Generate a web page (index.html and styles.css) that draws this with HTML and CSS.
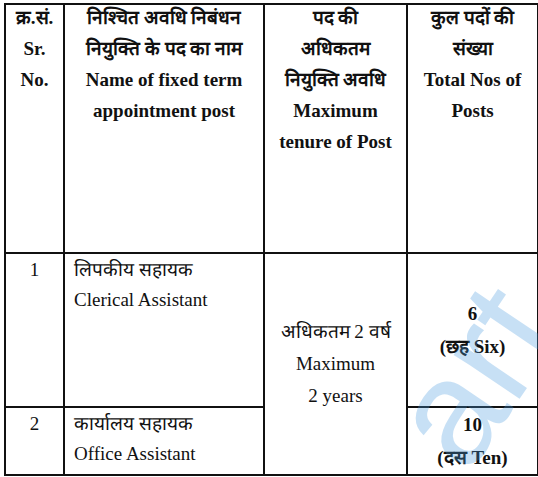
FILE: index.html
```html
<!DOCTYPE html>
<html>
<head>
<meta charset="utf-8">
<link rel="stylesheet" href="styles.css">
</head>
<body>
<div class="page">
  <table class="posts">
    <colgroup>
      <col class="c1"><col class="c2"><col class="c3"><col class="c4">
    </colgroup>
    <tr class="head">
      <th><div class="hd">क्र.सं.<br>Sr.<br>No.</div></th>
      <th><div class="hd">निश्चित अवधि निबंधन<br>नियुक्ति के पद का नाम<br>Name of fixed term<br>appointment post</div></th>
      <th><div class="hd">पद की<br>अधिकतम<br>नियुक्ति अवधि<br>Maximum<br>tenure of Post</div></th>
      <th><div class="hd">कुल पदों की<br>संख्या<br>Total Nos of<br>Posts</div></th>
    </tr>
    <tr class="r1">
      <td class="num">1</td>
      <td class="name">लिपकीय सहायक<br>Clerical Assistant</td>
      <td class="tenure" rowspan="2">अधिकतम 2 वर्ष<br>Maximum<br>2 years</td>
      <td class="count">6<br>(छह Six)</td>
    </tr>
    <tr class="r2">
      <td class="num">2</td>
      <td class="name">कार्यालय सहायक<br>Office Assistant</td>
      <td class="count">10<br>(दस Ten)</td>
    </tr>
  </table>
  <p class="note">(नोट- कार्यालय सहायक पदों की संख्या में परिवर्तन किया जा सकता है)</p>
  <div class="watermark">art</div>
</div>
</body>
</html>
```
FILE: styles.css
```css
html, body {
  margin: 0;
  padding: 0;
  background: #fff;
}
body {
  font-family: "Liberation Serif", "Times New Roman", Tinos, "DejaVu Serif", serif;
  color: #111;
  overflow: hidden;
  height: 477px;
}
.page {
  position: relative;
  padding: 3px 1px 0 4px;
  height: 477px;
  overflow: hidden;
}
.posts {
  border-collapse: collapse;
  table-layout: fixed;
  width: 533px;
}
.c1 { width: 59px; }
.c2 { width: 200px; }
.c3 { width: 143px; }
.c4 { width: 131px; }
.posts th, .posts td {
  border: 2px solid #111;
  padding: 0;
  font-family: "Liberation Serif", "Times New Roman", serif;
  font-size: 19px;
  line-height: 31px;
}
.posts th {
  vertical-align: top;
  text-align: center;
  font-weight: bold;
}
.hd {
  margin-top: -3px;
}
.head { height: 249px; }
.r1 { height: 154px; }
.r2 { height: 62px; }
.posts td { vertical-align: top; }
.num {
  text-align: center;
  padding-top: 1px;
}
.name {
  padding: 1px 0 0 9px !important;
  line-height: 30px !important;
}
.tenure {
  text-align: center;
  vertical-align: middle !important;
  line-height: 32px !important;
}
.count {
  text-align: center;
  vertical-align: middle !important;
  font-weight: bold;
  line-height: 33px !important;
}
.note {
  margin: 0;
  padding-left: 50px;
  font-size: 20px;
  line-height: 28px;
  white-space: nowrap;
}
.watermark {
  position: absolute;
  left: 385px;
  top: 300px;
  width: 176px;
  height: 150px;
  text-align: center;
  font-family: "Liberation Sans", sans-serif;
  font-size: 150px;
  line-height: 150px;
  color: #4a9be0;
  opacity: 0.3;
  transform: rotate(-56deg);
  transform-origin: center center;
  pointer-events: none;
}
```
